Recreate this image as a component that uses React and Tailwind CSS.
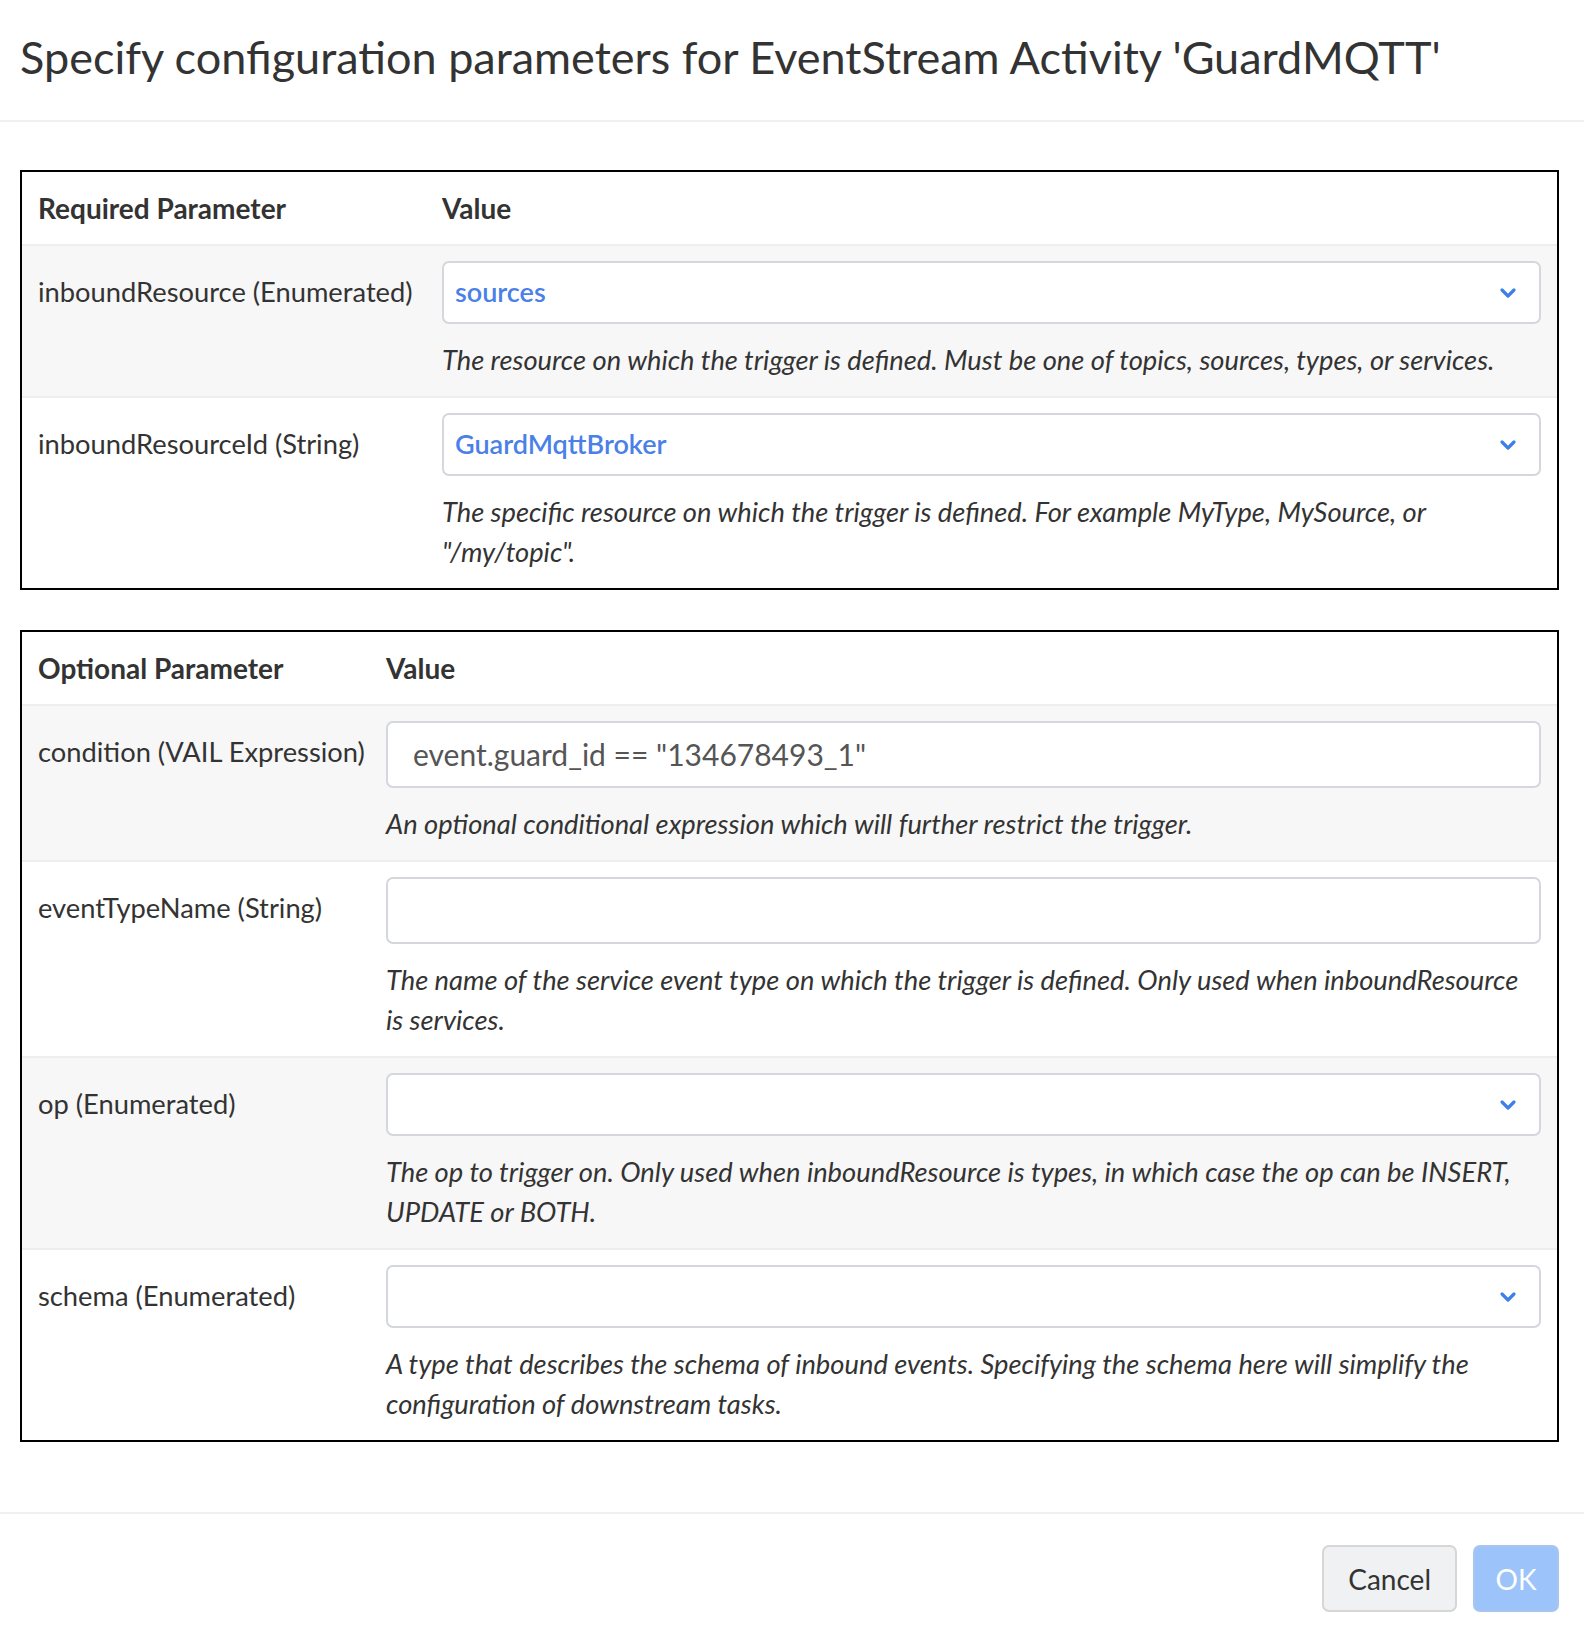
import React from 'react';

const Chevron = () => (
  <svg width="18" height="12" viewBox="0 0 18 12" className="shrink-0">
    <path d="M3 3 L9 9 L15 3" fill="none" stroke="#3f7fe9" strokeWidth="3.2" strokeLinecap="round" strokeLinejoin="round" />
  </svg>
);

const Select = ({ value }) => (
  <div className="h-[63px] border-2 border-[#d4d7dc] rounded-[7px] bg-white flex items-center justify-between pl-[11px] pr-[22px]">
    <span className="text-[27px] font-semibold text-[#4a80e8]">{value}</span>
    <Chevron />
  </div>
);

const Input = ({ value }) => (
  <div className="h-[67px] border-2 border-[#d4d7dc] rounded-[7px] bg-white flex items-center pl-[25px]">
    <span className="text-[30px] text-[#555]">{value}</span>
  </div>
);

const Row = ({ label, labelWidth, control, desc, shaded }) => (
  <div className={`flex border-t-2 border-[#eeeeee] ${shaded ? 'bg-[#f7f7f7]' : 'bg-white'}`}>
    <div className={`${labelWidth} shrink-0 pl-[16px] pt-[26px] text-[27.3px] leading-[40px] text-[#333]`}>{label}</div>
    <div className="flex-1 pr-[16px] pt-[15px] pb-[16px]">
      {control}
      <p className="mt-[16px] text-[27.3px] leading-[40px] italic text-[#333]">{desc}</p>
    </div>
  </div>
);

const ParamTable = ({ title, labelWidth, rows }) => (
  <div className="border-2 border-black">
    <div className="flex h-[72px] items-center text-[28px] font-bold text-[#333]">
      <div className={`${labelWidth} shrink-0 pl-[16px]`}>{title}</div>
      <div>Value</div>
    </div>
    {rows.map((r, i) => (
      <Row key={r.label} {...r} labelWidth={labelWidth} shaded={i % 2 === 0} />
    ))}
  </div>
);

export default function App() {
  const required = [
    {
      label: 'inboundResource (Enumerated)',
      control: <Select value="sources" />,
      desc: 'The resource on which the trigger is defined. Must be one of topics, sources, types, or services.',
    },
    {
      label: 'inboundResourceId (String)',
      control: <Select value="GuardMqttBroker" />,
      desc: 'The specific resource on which the trigger is defined. For example MyType, MySource, or "/my/topic".',
    },
  ];

  const optional = [
    {
      label: 'condition (VAIL Expression)',
      control: <Input value={'event.guard_id == "134678493_1"'} />,
      desc: 'An optional conditional expression which will further restrict the trigger.',
    },
    {
      label: 'eventTypeName (String)',
      control: <Input value="" />,
      desc: 'The name of the service event type on which the trigger is defined. Only used when inboundResource is services.',
    },
    {
      label: 'op (Enumerated)',
      control: <Select value="" />,
      desc: 'The op to trigger on. Only used when inboundResource is types, in which case the op can be INSERT, UPDATE or BOTH.',
    },
    {
      label: 'schema (Enumerated)',
      control: <Select value="" />,
      desc: 'A type that describes the schema of inbound events. Specifying the schema here will simplify the configuration of downstream tasks.',
    },
  ];

  return (
    <div className="w-[1584px] min-h-[1634px] bg-white font-[Lato,sans-serif] text-[#333]">
      <div className="h-[122px] border-b-2 border-[#f0f0f0] flex items-center pl-[20px] pb-[6px]">
        <h1 className="text-[45px] text-[#333] leading-none">Specify configuration parameters for EventStream Activity 'GuardMQTT'</h1>
      </div>

      <div className="pl-[20px] pr-[25px] pt-[48px] pb-[70px] flex flex-col gap-[40px]">
        <ParamTable title="Required Parameter" labelWidth="w-[420px]" rows={required} />
        <ParamTable title="Optional Parameter" labelWidth="w-[364px]" rows={optional} />
      </div>

      <div className="border-t-2 border-[#f0f0f0] flex justify-end gap-[16px] pr-[25px] pt-[31px] pb-[24px]">
        <button className="h-[67px] px-[24px] rounded-[7px] border-2 border-[#d6d6d6] bg-[#f0f1f3] text-[28px] text-[#333]">Cancel</button>
        <button className="h-[67px] w-[86px] rounded-[7px] border-2 border-[#a8c5ee] bg-[#9dc4fa] text-[28px] text-white">OK</button>
      </div>
    </div>
  );
}
